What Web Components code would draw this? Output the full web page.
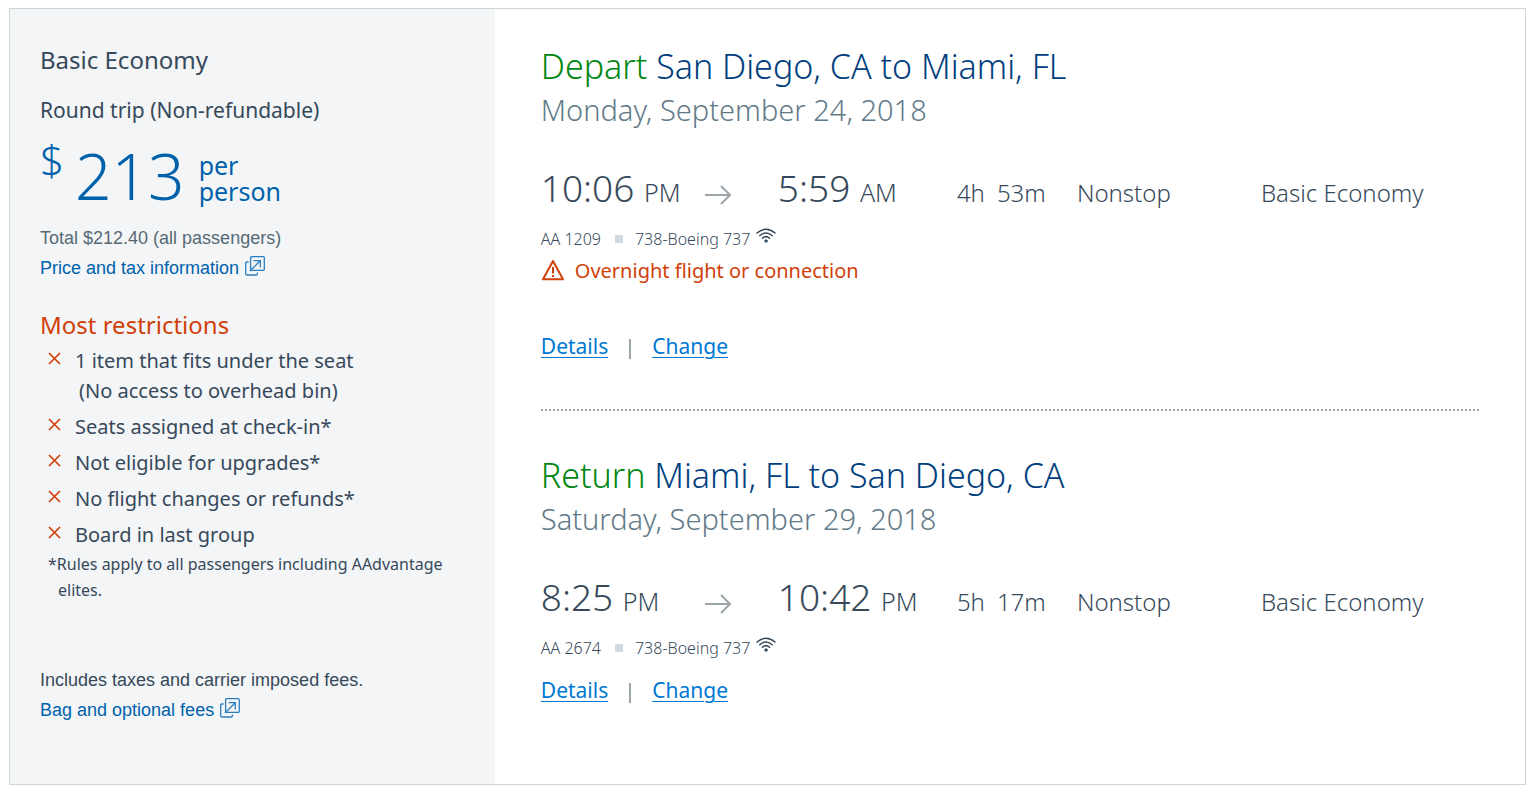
<!DOCTYPE html>
<html lang="en">
<head>
<meta charset="utf-8">
<title>Trip summary</title>
<style>
  body {
    --ink: #36495a;
    --blue: #0061ab;
    --alert: #d14009;
    margin: 8px 6px 7px 9px;
    background: #fff;
    color: var(--ink);
    font-family: "Noto Sans", sans-serif;
  }
</style>
</head>
<body>

<trip-summary>
  <fare-panel slot="fare" fare="Basic Economy" trip="Round trip (Non-refundable)" price="213">
    <span slot="total">Total $212.40 (all passengers)</span>
    <external-link slot="total-link" href="#price">Price and tax information</external-link>
    <restriction-item slot="rules">1 item that fits under the seat<span slot="more">(No access to overhead bin)</span></restriction-item>
    <restriction-item slot="rules">Seats assigned at check-in*</restriction-item>
    <restriction-item slot="rules">Not eligible for upgrades*</restriction-item>
    <restriction-item slot="rules">No flight changes or refunds*</restriction-item>
    <restriction-item slot="rules">Board in last group</restriction-item>
    <span slot="note">*Rules apply to all passengers including AAdvantage elites.</span>
    <span slot="fees">Includes taxes and carrier imposed fees.</span>
    <external-link slot="fees-link" href="#fees">Bag and optional fees</external-link>
  </fare-panel>

  <flight-leg kind="Depart" route="San Diego, CA to Miami, FL" date="Monday, September 24, 2018"
    from="10:06 PM" to="5:59 AM" duration="4h 53m" stops="Nonstop" cabin="Basic Economy"
    flight="AA 1209" aircraft="738-Boeing 737">
    <flight-alert slot="alert">Overnight flight or connection</flight-alert>
  </flight-leg>
  <flight-leg kind="Return" route="Miami, FL to San Diego, CA" date="Saturday, September 29, 2018"
    from="8:25 PM" to="10:42 PM" duration="5h 17m" stops="Nonstop" cabin="Basic Economy"
    flight="AA 2674" aircraft="738-Boeing 737"></flight-leg>
</trip-summary>

<script>
  class Base extends HTMLElement {
    connectedCallback() {
      if (this.shadowRoot) return;
      this.attachShadow({ mode: 'open' }).innerHTML = this.view(name => this.getAttribute(name) || '');
    }
  }

  customElements.define('trip-summary', class extends Base {
    view() {
      return `
        <style>
          :host { display: block; }
          .card {
            display: grid;
            grid-template-columns: 32% minmax(0, 1fr);
            background: #fff;
            border: 1px solid #d0d5d8;
            box-shadow: 0 1px 5px rgba(54, 73, 90, .3);
          }
          aside { background: #f4f5f7; }
          main { padding: 35px 46px; }
          ::slotted(flight-leg:not(:last-of-type)) {
            padding-bottom: 48px;
            border-bottom: 2px dotted #9da6ab;
            margin-bottom: 42px;
          }
        </style>
        <div class="card">
          <aside><slot name="fare"></slot></aside>
          <main><slot></slot></main>
        </div>`;
    }
  });

  customElements.define('fare-panel', class extends Base {
    view(a) {
      return `
        <style>
          :host { display: block; padding: 35px 30px 59px; }
          h2, h3, p, ul { margin: 0; padding: 0; font-weight: 400; }
          h2, h3 { font-size: 24px; line-height: 32px; }
          .trip { margin-top: 20px; font-size: 21px; line-height: 28px; }
          .price { display: flex; margin-top: 16px; color: var(--blue); font-weight: 300; }
          .sign { font-size: 42px; line-height: 40px; margin-right: 11px; }
          .amount { font-size: 64px; line-height: 60px; margin: 6px 14px 0 0; }
          .per { font-size: 25px; line-height: 26px; font-weight: 400; margin-top: 12px; }
          .small { font: 18px/30px "Liberation Sans", Arial, sans-serif; }
          .total { margin-top: 17px; color: #566a74; }
          h3 { margin-top: 26px; color: var(--alert); }
          ul { display: grid; gap: 6px; margin-top: 5px; padding-left: 8px; }
          .note { margin-top: 1px; padding-left: 18px; text-indent: -10px; font-size: 16px; line-height: 26px; }
          .fees { margin-top: 62px; }
        </style>
        <h2>${a('fare')}</h2>
        <p class="trip">${a('trip')}</p>
        <div class="price">
          <span class="sign">$</span>
          <span class="amount">${a('price')}</span>
          <span class="per">per<br>person</span>
        </div>
        <p class="small total"><slot name="total"></slot></p>
        <p class="small"><slot name="total-link"></slot></p>
        <h3>Most restrictions</h3>
        <ul role="list"><slot name="rules"></slot></ul>
        <p class="note"><slot name="note"></slot></p>
        <p class="small fees"><slot name="fees"></slot></p>
        <p class="small"><slot name="fees-link"></slot></p>`;
    }
  });

  customElements.define('restriction-item', class extends Base {
    view() {
      this.setAttribute('role', 'listitem');
      return `
        <style>
          :host { display: flex; gap: 14px; font-size: 20px; line-height: 30px; }
          svg { flex: none; width: 13px; height: 26px; stroke: var(--alert); stroke-width: 1.7; }
          ::slotted([slot=more]) { display: block; padding-left: 4px; }
        </style>
        <svg viewBox="0 0 13 26" aria-hidden="true"><path d="M1 7l11 11M12 7l-11 11"/></svg>
        <div><slot></slot><slot name="more"></slot></div>`;
    }
  });

  customElements.define('external-link', class extends Base {
    view(a) {
      return `
        <style>
          :host { display: block; }
          a { display: inline-flex; gap: 6px; color: var(--blue); text-decoration: none; }
          svg { width: 20px; height: 26px; fill: none; stroke: #2b7fc0; stroke-width: 1.3; }
        </style>
        <a href="${a('href')}"><slot></slot><svg viewBox="0 0 20 26" aria-hidden="true">
          <rect x="5.600" y="3.600" width="13.700" height="13.700" rx="1"/>
          <path d="M3.600 9H2Q.7 9 .7 10.300V20.700Q.7 22 2 22H11Q12.400 22 12.400 20.700V19.500"/>
          <path d="M5 18L15 8M8.500 7.600H15.300V14.400"/>
        </svg></a>`;
    }
  });

  customElements.define('flight-alert', class extends Base {
    view() {
      return `
        <style>
          :host {
            display: flex; align-items: center; gap: 10px;
            margin-top: 2px; padding-bottom: 31px;
            color: var(--alert); font-size: 20px; line-height: 32px; font-weight: 400;
          }
          svg { width: 24px; height: 24px; fill: none; stroke: currentColor; stroke-width: 2; }
        </style>
        <svg viewBox="0 0 24 24" aria-hidden="true">
          <path d="M12 2L22 20.300H2Z" stroke-linejoin="round"/>
          <path d="M12 8V14.500M12 16V18"/>
        </svg>
        <span><slot></slot></span>`;
    }
  });

  customElements.define('flight-leg', class extends Base {
    view(a) {
      const time = value => {
        const [clock, half] = value.split(' ');
        return `<span class="time">${clock} <small>${half}</small></span>`;
      };
      const [hours, minutes] = a('duration').split(' ');
      return `
        <style>
          :host { display: block; font-weight: 300; }
          h2, p { margin: 0; font-weight: inherit; }
          h2 { color: #003e7e; font-size: 34px; line-height: 44px; }
          h2 span { color: #008712; }
          .date { color: #627a88; font-size: 29px; line-height: 44px; }
          .times {
            display: grid;
            grid-template-columns: 164fr 73fr 179fr 120fr 184fr 218fr;
            align-items: baseline;
            margin-top: 32px;
            font-size: 24px;
            line-height: 48px;
            white-space: nowrap;
          }
          .time { font-size: 37px; }
          small { font-size: 25px; }
          .arrow { width: 26px; height: 20px; align-self: center; margin-top: 8px; fill: none; stroke: #9da6ab; stroke-width: 2; }
          .length { display: flex; gap: 12px; }
          .plane { display: flex; align-items: center; margin-top: 8px; font-size: 16px; line-height: 28px; }
          .plane i { width: 8px; height: 8px; margin: 0 12px 0 14px; background: #d0dae0; }
          .wifi { width: 20px; height: 16px; margin: 0 0 6px 6px; fill: none; stroke: var(--ink); stroke-width: 1.5; stroke-linecap: round; }
          nav { display: flex; align-items: center; gap: 21px; margin-top: 13px; font-size: 21px; line-height: 30px; font-weight: 400; }
          nav a { color: #0078d2; text-decoration-thickness: 1px; text-underline-offset: 3px; }
          nav b { width: 2px; height: 20px; margin-top: 6px; background: #9da6ab; }
        </style>
        <h2><span>${a('kind')}</span> ${a('route')}</h2>
        <p class="date">${a('date')}</p>
        <div class="times">
          ${time(a('from'))}
          <svg class="arrow" viewBox="0 0 26 20" role="img" aria-label="to"><path d="M0 10H25M16 1L25 10L16 19"/></svg>
          ${time(a('to'))}
          <span class="length"><span>${hours}</span><span>${minutes}</span></span>
          <span>${a('stops')}</span>
          <span>${a('cabin')}</span>
        </div>
        <div class="plane">
          <span>${a('flight')}</span><i></i><span>${a('aircraft')}</span>
          <svg class="wifi" viewBox="0 0 20 16" role="img" aria-label="Wi-Fi">
            <path d="M1 5Q10-2.500 19 5M3.800 7.700Q10 2.300 16.200 7.700M6.500 10.300Q10 7 13.500 10.300"/>
            <circle cx="10" cy="13" r="1.200" fill="#36495a" stroke-width="1"/>
          </svg>
        </div>
        <slot name="alert"></slot>
        <nav><a href="#details">Details</a><b></b><a href="#change">Change</a></nav>`;
    }
  });
</script>
</body>
</html>
